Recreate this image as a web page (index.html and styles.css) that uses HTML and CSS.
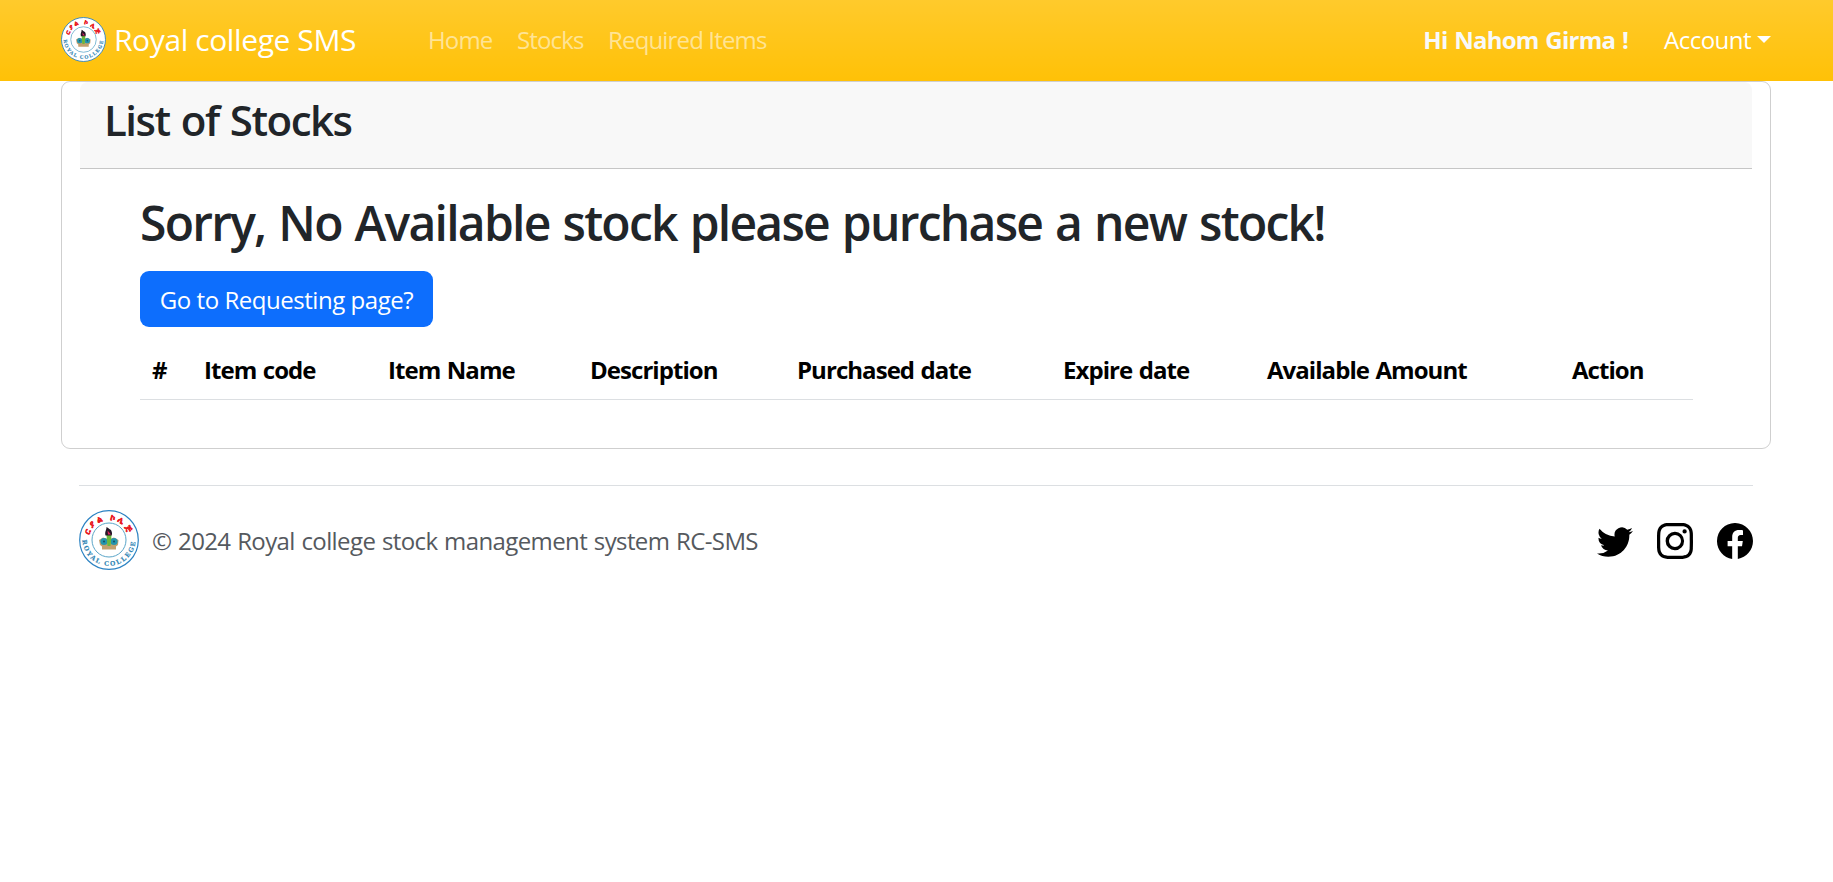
FILE: index.html
```html
<!DOCTYPE html>
<html lang="en">
<head>
<meta charset="utf-8">
<title>Royal college SMS</title>
<link rel="stylesheet" href="styles.css">
</head>
<body>
<nav class="navbar">
  <div class="container navbar-inner">
    <a class="brand">
      <svg class="brand-logo" viewBox="0 0 60 60">
        <g id="crest">
          <circle cx="30" cy="30" r="29.3" fill="#fff" stroke="#2c83c3" stroke-width="1.200"/>
          <circle cx="30" cy="30" r="17" fill="#fff" stroke="#5aa5c8"/>
          <path id="arc-top" d="M10.500 36a20.300 20.300 0 1 1 39 0" fill="none"/>
          <path id="arc-bottom" d="M4.500 22a26.500 26.500 0 1 0 51 0" fill="none"/>
          <text class="crest-top"><textPath href="#arc-top" startOffset="50%" text-anchor="middle">ርያል ኮሌጅ</textPath></text>
          <text class="crest-bottom"><textPath href="#arc-bottom" startOffset="50%" text-anchor="middle">ROYAL COLLEGE</textPath></text>
          <path d="M20 30l4-2.500 3 1h5l3-1 4.500 2.500-.5 5-2 1.500v3H23v-3l-2-1.500z" fill="#c3a06e"/>
          <circle cx="25" cy="31.500" r="3.600" fill="#2496ae"/><circle cx="35" cy="31.500" r="3.600" fill="#2496ae"/>
          <circle cx="25" cy="31.500" r="1" fill="#174d66"/><circle cx="35" cy="31.500" r="1" fill="#174d66"/>
          <path d="M27.500 25h5l-1 11h-3z" fill="#6cb83c"/>
          <path d="M26.500 25.500c-1-4 1-5 1-8.500 2 1 2.500 2 4.500 3 1 2 1.500 4 .5 5.500z" fill="#221525"/>
          <path d="M28.500 20.500l3.500 4h-3z" fill="#e0215b"/>
        </g>
      </svg>
      <span class="brand-name">Royal college SMS</span></a>
    <div class="nav-links"><a>Home</a><a>Stocks</a><a>Required Items</a></div>
    <div class="nav-user"><strong class="greeting">Hi Nahom Girma !</strong><a class="account">Account<i class="caret"></i></a></div>
  </div>
</nav>
<main class="container card">
  <header class="card-header"><h3 class="card-title">List of Stocks</h3></header>
  <section class="card-body">
    <h2 class="message">Sorry, No Available stock please purchase a new stock!</h2>
    <a class="button">Go to Requesting page?</a>
    <table class="stock-table">
      <colgroup><col class="c-num"><col class="c-code"><col class="c-name"><col class="c-desc"><col class="c-bought"><col class="c-expire"><col class="c-amount"><col></colgroup>
      <thead><tr><th>#</th><th>Item code</th><th>Item Name</th><th>Description</th><th>Purchased date</th><th>Expire date</th><th>Available Amount</th><th>Action</th></tr></thead>
    </table>
  </section>
</main>
<footer class="footer">
  <svg class="footer-logo" viewBox="0 0 60 60"><use href="#crest"/></svg>
  <span class="copyright">© 2024 Royal college stock management system RC-SMS</span>
  <div class="social">
    <svg viewBox="0 0 16 16"><path d="M5.026 15c6.038 0 9.341-5.003 9.341-9.334 0-.14 0-.282-.006-.422A6.685 6.685 0 0 0 16 3.542a6.658 6.658 0 0 1-1.889.518 3.301 3.301 0 0 0 1.447-1.817 6.533 6.533 0 0 1-2.087.793A3.286 3.286 0 0 0 7.875 6.030a9.325 9.325 0 0 1-6.767-3.429 3.289 3.289 0 0 0 1.018 4.382A3.323 3.323 0 0 1 .64 6.575v.045a3.288 3.288 0 0 0 2.632 3.218 3.203 3.203 0 0 1-.865.115 3.230 3.230 0 0 1-.614-.057 3.283 3.283 0 0 0 3.067 2.277A6.600 6.600 0 0 1 .78 13.580a6.320 6.320 0 0 1-.78-.045A9.344 9.344 0 0 0 5.026 15z"/></svg>
    <svg viewBox="0 0 16 16"><path d="M8 0C5.829 0 5.556.01 4.703.048 3.850.088 3.269.222 2.760.420a3.917 3.917 0 0 0-1.417.923A3.927 3.927 0 0 0 .420 2.760C.222 3.268.087 3.850.048 4.700.010 5.555 0 5.827 0 8.001c0 2.172.010 2.444.048 3.297.040.852.174 1.433.372 1.942.205.526.478.972.923 1.417.444.445.890.719 1.416.923.510.198 1.090.333 1.942.372C5.555 15.990 5.827 16 8 16s2.444-.010 3.298-.048c.851-.040 1.434-.174 1.943-.372a3.916 3.916 0 0 0 1.416-.923c.445-.445.718-.891.923-1.417.197-.509.332-1.090.372-1.942C15.990 10.445 16 10.173 16 8s-.010-2.445-.048-3.299c-.040-.851-.175-1.433-.372-1.941a3.926 3.926 0 0 0-.923-1.417A3.911 3.911 0 0 0 13.240.420c-.510-.198-1.092-.333-1.943-.372C10.443.010 10.172 0 7.998 0H8zm-.717 1.442h.718c2.136 0 2.389.007 3.232.046.780.035 1.204.166 1.486.275.373.145.640.319.920.599.280.280.453.546.598.920.110.281.240.705.275 1.485.039.843.047 1.096.047 3.231s-.008 2.389-.047 3.232c-.035.780-.166 1.203-.275 1.485a2.470 2.470 0 0 1-.599.919c-.280.280-.546.453-.920.598-.280.110-.704.240-1.485.276-.843.038-1.096.047-3.232.047s-2.390-.009-3.233-.047c-.780-.036-1.203-.166-1.485-.276a2.478 2.478 0 0 1-.920-.598 2.480 2.480 0 0 1-.600-.920c-.109-.281-.240-.705-.275-1.485-.038-.843-.046-1.096-.046-3.233 0-2.136.008-2.388.046-3.231.036-.780.166-1.204.276-1.486.145-.373.319-.640.599-.920.280-.280.546-.453.920-.598.282-.110.705-.240 1.485-.276.738-.034 1.024-.044 2.515-.045v.002zm4.988 1.328a.960.960 0 1 0 0 1.920.960.960 0 0 0 0-1.920zm-4.270 1.122a4.109 4.109 0 1 0 0 8.217 4.109 4.109 0 0 0 0-8.217zm0 1.441a2.667 2.667 0 1 1 0 5.334 2.667 2.667 0 0 1 0-5.334z"/></svg>
    <svg viewBox="0 0 16 16"><path d="M16 8.049c0-4.446-3.582-8.050-8-8.050C3.580 0-.002 3.603-.002 8.050c0 4.017 2.926 7.347 6.750 7.951v-5.625h-2.030V8.050H6.750V6.275c0-2.017 1.195-3.131 3.022-3.131.876 0 1.791.157 1.791.157v1.980h-1.009c-.993 0-1.303.621-1.303 1.258v1.510h2.218l-.354 2.326H9.250V16c3.824-.604 6.750-3.934 6.750-7.951z"/></svg>
  </div>
</footer>
</body>
</html>
```
FILE: styles.css
```css
* { box-sizing: border-box; }
body { margin: 0; background: #fff; color: #212529; font: 24px/1.5 "Open Sans", "Noto Sans", sans-serif; white-space: nowrap; }
.crest-top { font: bold 8.5px "Noto Sans", sans-serif; letter-spacing: 2.2px; fill: #e8191f; stroke: #e8191f; stroke-width: .4px; }
.crest-bottom { font: bold 6.8px "Liberation Serif", serif; letter-spacing: 1.7px; fill: #2c83b3; stroke: #2c83b3; stroke-width: .2px; }

.container { width: 1710px; margin: 0 61px; }
.navbar { height: 81px; background: #ffc107 linear-gradient(180deg, rgba(255,255,255,.15), rgba(255,255,255,0)); color: #fff; }
.navbar-inner { display: flex; align-items: center; height: 79px; }
.brand { display: flex; align-items: center; gap: 8px; width: 367px; }
.brand-logo { width: 45px; height: 45px; }
.brand-name { font-size: 30px; letter-spacing: -.4px; }
.nav-links { display: flex; gap: 24.5px; color: rgba(255,255,255,.55); letter-spacing: -.85px; }
.nav-user { display: flex; gap: 36px; margin-left: auto; color: #fff; }
.greeting { color: #f8f9fa; letter-spacing: -.75px; word-spacing: 1.2px; }
.account { display: flex; letter-spacing: -.52px; }
.caret { margin: 14px 0 0 6px; width: 14px; height: 7px; border: 7px solid transparent; border-top-color: #fff; border-bottom: 0; }

.card { height: 368px; padding: 0 18px; border: 1px solid rgba(0,0,0,.19); border-radius: 9px; }
.card-header { height: 87px; padding: 13px 24px; background: rgba(33,37,41,.03); border-bottom: 1px solid rgba(0,0,0,.2); border-radius: 8px 8px 0 0; }
.card-title { margin: 0; font-size: 42px; font-weight: 600; line-height: 50px; letter-spacing: -1.5px; word-spacing: 1.8px; }
.card-body { padding: 25px 60px; }
.message { margin: 0 0 19px; font-size: 48px; font-weight: 600; line-height: 58px; letter-spacing: -1.75px; word-spacing: 2.2px; }
.button { display: block; width: 293px; height: 56px; padding: 11px 18px; border-radius: 9px; background: #0d6efd; color: #fff; text-align: center; letter-spacing: -.46px; }

.stock-table { width: 1553px; margin-top: 12px; table-layout: fixed; border-collapse: collapse; color: #000; }
.stock-table th { padding: 13px 12px 11px 13px; border-bottom: 1px solid #dcdfe2; text-align: left; letter-spacing: -.95px; word-spacing: 1.2px; }
.stock-table th:first-child { padding-left: 12px; }
.c-num { width: 51px; }
.c-code { width: 184px; }
.c-name { width: 202px; }
.c-desc { width: 207px; }
.c-bought { width: 266px; }
.c-expire { width: 204px; }
.c-amount { width: 305px; }

.footer { display: flex; align-items: center; width: 1674px; height: 109px; margin: 36px 0 0 79px; border-top: 1px solid #dcdfe2; }
.footer-logo { width: 60px; height: 60px; margin-right: 13px; }
.copyright { padding-top: 1px; color: #55595e; letter-spacing: -.6px; word-spacing: 1px; }
.social { display: flex; gap: 24px; margin: 2px 0 0 auto; }
.social svg { width: 36px; height: 36px; fill: #000; }
```
